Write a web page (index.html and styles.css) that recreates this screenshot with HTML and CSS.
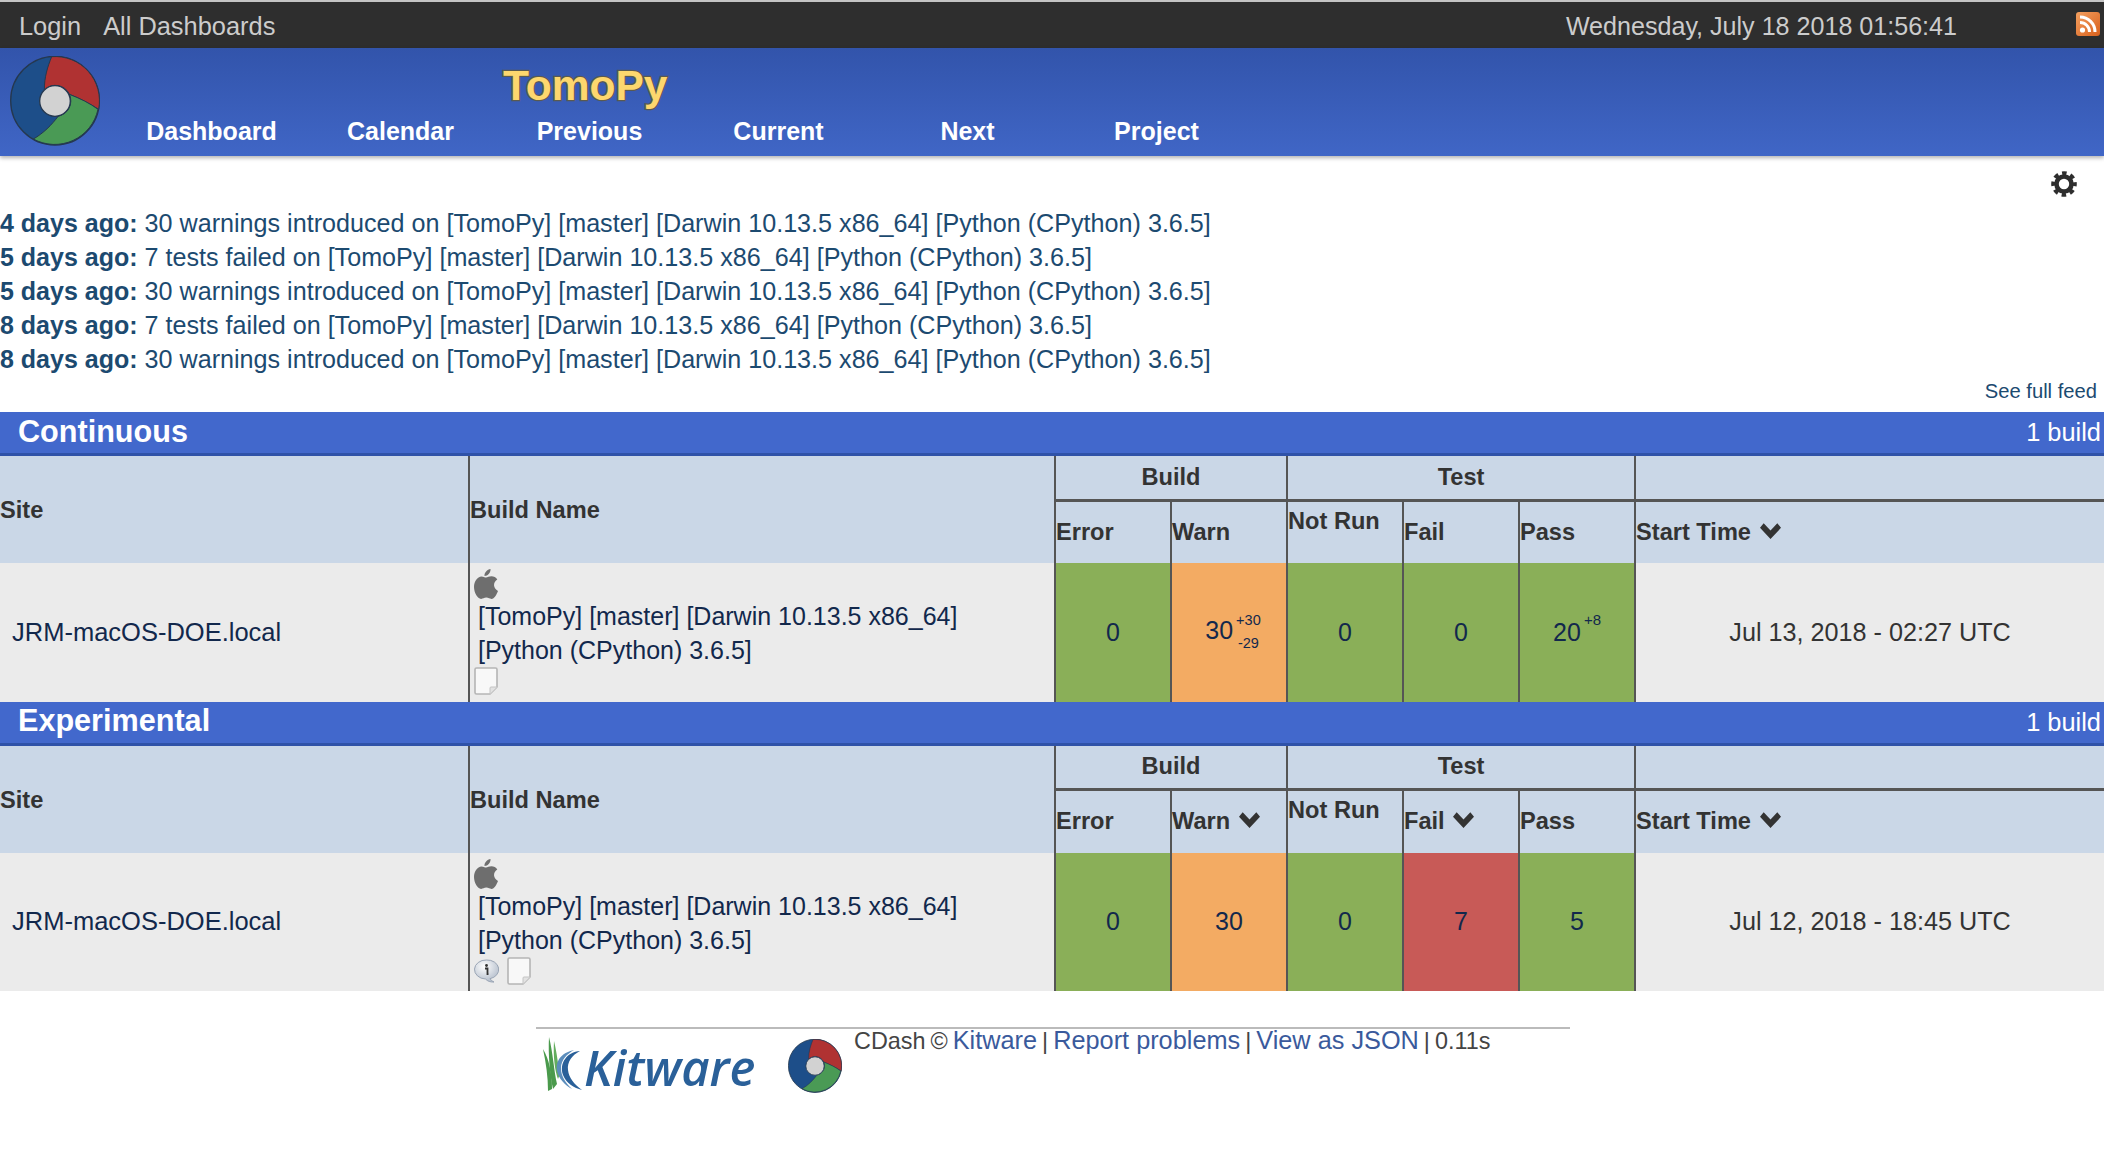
FILE: index.html
```html
<!DOCTYPE html>
<html lang="en">
<head>
    <meta charset="UTF-8">
    <title>CDash - TomoPy</title>
    <link rel="stylesheet" href="styles.css">
</head>
<body>
    <!-- Top bar -->
    <div class="topbar">
        <div class="topbar-links">
            <a href="#">Login</a>
            <a href="#">All Dashboards</a>
        </div>
        <div class="topbar-right">
            <span class="topbar-date">Wednesday, July 18 2018 01:56:41</span>
            <svg class="rss" viewBox="0 0 24 24">
                <defs>
                    <linearGradient id="rss-bg" x1="0" y1="0" x2="1" y2="1">
                        <stop offset="0" stop-color="#f3a060"/>
                        <stop offset="1" stop-color="#d9601c"/>
                    </linearGradient>
                </defs>
                <rect width="24" height="24" rx="3" fill="url(#rss-bg)"/>
                <circle cx="6.5" cy="18" r="2.6" fill="#fff"/>
                <path d="M4 10.5a9.5 9.5 0 0 1 9.5 9.5M4 5a15 15 0 0 1 15 15" fill="none" stroke="#fff" stroke-width="3"/>
            </svg>
        </div>
    </div>

    <!-- Header -->
    <div class="header">
        <svg class="logo" viewBox="30 48 270 270">
            <circle cx="165" cy="182" r="133" fill="#1d4e89" stroke="#25384f" stroke-width="4"/>
            <path d="M155 50A133 133 0 0 1 296 208C268 190 238 175 208 163A46 46 0 0 0 133 150C133 110 143 80 155 50Z" fill="#b03232" stroke="#25384f" stroke-width="3"/>
            <path d="M294 208A133 133 0 0 1 100 297C130 280 155 255 175 228A46 46 0 0 0 208 163C240 175 270 190 294 208Z" fill="#4a9a55" stroke="#25384f" stroke-width="3"/>
            <circle cx="165" cy="183" r="46" fill="#d2d2d2" stroke="#25384f" stroke-width="4"/>
        </svg>
        <div class="header-main">
            <div class="project-title">TomoPy</div>
            <div class="nav">
                <a href="#">Dashboard</a>
                <a href="#">Calendar</a>
                <a href="#">Previous</a>
                <a href="#">Current</a>
                <a href="#">Next</a>
                <a href="#">Project</a>
            </div>
        </div>
    </div>

    <!-- Settings -->
    <div class="settings">
        <svg class="gear" viewBox="0 0 26 26">
            <circle cx="13" cy="13" r="7.5" fill="none" stroke="#2e2e2e" stroke-width="4.6"/>
            <circle cx="13" cy="13" r="10.8" fill="none" stroke="#2e2e2e" stroke-width="4" stroke-dasharray="4.5 3.98" stroke-dashoffset="2.25"/>
        </svg>
    </div>

    <!-- Feed -->
    <div class="feed">
        <div><b>4 days ago:</b> 30 warnings introduced on [TomoPy] [master] [Darwin 10.13.5 x86_64] [Python (CPython) 3.6.5]</div>
        <div><b>5 days ago:</b> 7 tests failed on [TomoPy] [master] [Darwin 10.13.5 x86_64] [Python (CPython) 3.6.5]</div>
        <div><b>5 days ago:</b> 30 warnings introduced on [TomoPy] [master] [Darwin 10.13.5 x86_64] [Python (CPython) 3.6.5]</div>
        <div><b>8 days ago:</b> 7 tests failed on [TomoPy] [master] [Darwin 10.13.5 x86_64] [Python (CPython) 3.6.5]</div>
        <div><b>8 days ago:</b> 30 warnings introduced on [TomoPy] [master] [Darwin 10.13.5 x86_64] [Python (CPython) 3.6.5]</div>
    </div>
    <div class="feed-more"><a href="#">See full feed</a></div>

    <!-- Continuous -->
    <div class="band">
        <span class="band-title">Continuous</span>
        <span class="band-count">1 build</span>
    </div>
    <table class="builds">
        <colgroup>
            <col class="col-site"><col class="col-name"><col class="col-num"><col class="col-num"><col class="col-num"><col class="col-num"><col class="col-num"><col>
        </colgroup>
        <thead>
            <tr class="head-top">
                <th rowspan="2" class="left span-head">Site</th>
                <th rowspan="2" class="left span-head">Build Name</th>
                <th colspan="2">Build</th>
                <th colspan="3">Test</th>
                <th></th>
            </tr>
            <tr class="head-sub">
                <th class="left">Error</th>
                <th class="left">Warn</th>
                <th class="left raised">Not Run</th>
                <th class="left">Fail</th>
                <th class="left">Pass</th>
                <th class="left">Start Time <svg class="chevron" viewBox="0 0 20 15"><path d="M0 4.500L3.500 0 10 7 16.500 0 20 4.500 10 15z"/></svg></th>
            </tr>
        </thead>
        <tbody>
            <tr>
                <td class="site">JRM-macOS-DOE.local</td>
                <td class="name">
                    <svg class="apple" viewBox="0 0 24 30"><path d="M16.500 0c.4 3.500-2.600 7-6 7-.3-3.300 2.700-6.500 6-7zM12 8.500c1.500 0 3-1.200 5.500-1.200 2.200 0 4.500 1.100 5.800 3.300-4.800 2.800-4 9.300 .7 11.300-1.200 3.200-3.700 8-6.500 8-2 0-2.800-1.300-5.200-1.300s-3.200 1.300-5.200 1.300C3.500 29.900 0 23.500 0 18 0 12.300 3.500 7.500 7.500 7.400c1.900 0 3.200 1.100 4.500 1.100z"/></svg>
                    <div class="name-text">[TomoPy] [master] [Darwin 10.13.5 x86_64]<br>[Python (CPython) 3.6.5]</div>
                    <div class="name-icons">
                        <svg class="doc" viewBox="0 0 24 28"><path d="M2.500 1h19a1.500 1.500 0 0 1 1.500 1.500V20l-7 7H2.500A1.500 1.500 0 0 1 1 25.500v-23A1.500 1.500 0 0 1 2.500 1z" fill="#f8f8f8" stroke="#b5b5b5" stroke-width="1.600"/><path d="M23 20h-6a1 1 0 0 0-1 1v6" fill="#e2e2e2" stroke="#c4c4c4"/></svg>
                    </div>
                </td>
                <td class="num good">0</td>
                <td class="num warn has-delta">30<span class="delta"><span>+30</span><span>-29</span></span></td>
                <td class="num good">0</td>
                <td class="num good">0</td>
                <td class="num good">20<span class="delta-up">+8</span></td>
                <td class="time">Jul 13, 2018 - 02:27 UTC</td>
            </tr>
        </tbody>
    </table>

    <!-- Experimental -->
    <div class="band">
        <span class="band-title">Experimental</span>
        <span class="band-count">1 build</span>
    </div>
    <table class="builds">
        <colgroup>
            <col class="col-site"><col class="col-name"><col class="col-num"><col class="col-num"><col class="col-num"><col class="col-num"><col class="col-num"><col>
        </colgroup>
        <thead>
            <tr class="head-top">
                <th rowspan="2" class="left span-head">Site</th>
                <th rowspan="2" class="left span-head">Build Name</th>
                <th colspan="2">Build</th>
                <th colspan="3">Test</th>
                <th></th>
            </tr>
            <tr class="head-sub">
                <th class="left">Error</th>
                <th class="left">Warn <svg class="chevron" viewBox="0 0 20 15"><path d="M0 4.500L3.500 0 10 7 16.500 0 20 4.500 10 15z"/></svg></th>
                <th class="left raised">Not Run</th>
                <th class="left">Fail <svg class="chevron" viewBox="0 0 20 15"><path d="M0 4.500L3.500 0 10 7 16.500 0 20 4.500 10 15z"/></svg></th>
                <th class="left">Pass</th>
                <th class="left">Start Time <svg class="chevron" viewBox="0 0 20 15"><path d="M0 4.500L3.500 0 10 7 16.500 0 20 4.500 10 15z"/></svg></th>
            </tr>
        </thead>
        <tbody>
            <tr>
                <td class="site">JRM-macOS-DOE.local</td>
                <td class="name">
                    <svg class="apple" viewBox="0 0 24 30"><path d="M16.500 0c.4 3.500-2.600 7-6 7-.3-3.300 2.700-6.500 6-7zM12 8.500c1.500 0 3-1.200 5.500-1.200 2.200 0 4.500 1.100 5.800 3.300-4.800 2.800-4 9.300 .7 11.300-1.200 3.200-3.700 8-6.500 8-2 0-2.800-1.300-5.200-1.300s-3.200 1.300-5.200 1.300C3.500 29.900 0 23.500 0 18 0 12.300 3.500 7.500 7.500 7.400c1.900 0 3.200 1.100 4.500 1.100z"/></svg>
                    <div class="name-text">[TomoPy] [master] [Darwin 10.13.5 x86_64]<br>[Python (CPython) 3.6.5]</div>
                    <div class="name-icons">
                        <svg class="info" viewBox="0 0 25 24">
                            <defs>
                                <radialGradient id="info-bg" cx="0.4" cy="0.3" r="0.8">
                                    <stop offset="0" stop-color="#ffffff"/>
                                    <stop offset="1" stop-color="#a9b4c4"/>
                                </radialGradient>
                            </defs>
                            <path d="M12.500 1a11.500 9.500 0 0 1 3.500 18.700c1 1.500 2.200 2.700 4 3.300-3.500 .3-6.500-.8-8.500-3A11.500 9.500 0 0 1 12.500 1z" fill="url(#info-bg)" stroke="#9aa5b5"/>
                            <circle cx="12.500" cy="6.500" r="1.400" fill="#333"/>
                            <path d="M11 9.500h2.500v5.500h1" fill="none" stroke="#333" stroke-width="1.800"/>
                        </svg>
                        <svg class="doc" viewBox="0 0 24 28"><path d="M2.500 1h19a1.500 1.500 0 0 1 1.500 1.500V20l-7 7H2.500A1.500 1.500 0 0 1 1 25.500v-23A1.500 1.500 0 0 1 2.500 1z" fill="#f8f8f8" stroke="#b5b5b5" stroke-width="1.600"/><path d="M23 20h-6a1 1 0 0 0-1 1v6" fill="#e2e2e2" stroke="#c4c4c4"/></svg>
                    </div>
                </td>
                <td class="num good">0</td>
                <td class="num warn">30</td>
                <td class="num good">0</td>
                <td class="num bad">7</td>
                <td class="num good">5</td>
                <td class="time">Jul 12, 2018 - 18:45 UTC</td>
            </tr>
        </tbody>
    </table>

    <!-- Footer -->
    <div class="footer">
        <div class="kitware">
            <svg class="kitware-mark" viewBox="0 0 40 54">
                <path d="M1 12C4 26 6 40 6 54L10 52C10 36 7 22 1 12Z" fill="#4a9a4c"/>
                <path d="M7 0C6 18 8 38 11 52L15 47C12 34 11 16 7 0Z" fill="#4a9a4c"/>
                <path d="M12 4C11 20 13 34 16 42L18 37C16 28 15 16 12 4Z" fill="#63ad5e"/>
                <path d="M38 14C25 15 17 26 21 38 24 46 32 51 40 53 32 47 27 41 26 33 25 25 30 18 38 14Z" fill="#2a6099"/>
                <path d="M32 13C22 15 13 22 15 34 17 42 23 48 30 52 23 45 19 39 19 31 19 23 25 17 32 13Z" fill="#5b8dbc"/>
            </svg>
            <span class="kitware-name">Kitware</span>
        </div>
        <svg class="footer-logo" viewBox="30 48 270 270">
            <circle cx="165" cy="182" r="133" fill="#1d4e89" stroke="#25384f" stroke-width="4"/>
            <path d="M155 50A133 133 0 0 1 296 208C268 190 238 175 208 163A46 46 0 0 0 133 150C133 110 143 80 155 50Z" fill="#b03232" stroke="#25384f" stroke-width="3"/>
            <path d="M294 208A133 133 0 0 1 100 297C130 280 155 255 175 228A46 46 0 0 0 208 163C240 175 270 190 294 208Z" fill="#4a9a55" stroke="#25384f" stroke-width="3"/>
            <circle cx="165" cy="183" r="46" fill="#d2d2d2" stroke="#25384f" stroke-width="4"/>
        </svg>
        <div class="footer-text">CDash © <a href="#">Kitware</a> | <a href="#">Report problems</a> | <a href="#">View as JSON</a> | 0.11s</div>
    </div>
</body>
</html>
```

FILE: styles.css
```css
body {
    margin: 0;
    background: #fff;
    font-family: "Liberation Sans", Arial, sans-serif;
    font-size: 24px;
    color: #12284c;
}

a {
    color: inherit;
    text-decoration: none;
}

.topbar {
    height: 46px;
    border-top: 2px solid #c4c4c4;
    background: #2e2e2e;
    color: #ccc;
    display: flex;
    justify-content: space-between;
    align-items: center;
}

.topbar-links {
    display: flex;
    gap: 22px;
    padding: 2px 0 0 19px;
    font-size: 25.4px;
}

.topbar-right {
    display: flex;
    align-items: center;
    font-size: 25.1px;
}

.topbar-date {
    padding-top: 2px;
    margin-right: 119px;
}

.rss {
    width: 24px;
    height: 24px;
    margin-right: 4px;
    margin-top: -2px;
}

.header {
    height: 108px;
    background: linear-gradient(#3254ab, #4066c6);
    box-shadow: 0 2px 4px rgba(0, 0, 0, 0.3);
    display: flex;
    position: relative;
}

.logo {
    width: 90px;
    height: 90px;
    margin: 8px 0 0 10px;
    flex: none;
}

.header-main {
    margin-left: 17px;
}

.project-title {
    height: 66px;
    padding-left: 386px;
    padding-top: 17px;
    box-sizing: border-box;
    font-size: 42.5px;
    line-height: 42px;
    font-weight: bold;
    color: #fdd76e;
    -webkit-text-stroke: 2.5px #5a5a50;
    paint-order: stroke fill;
}

.nav {
    display: flex;
}

.nav a {
    width: 189px;
    text-align: center;
    color: #fff;
    font-size: 25px;
    font-weight: bold;
    line-height: 34px;
}

.settings {
    display: flex;
    justify-content: flex-end;
    padding: 15px 27px 0 0;
}

.gear {
    width: 26px;
    height: 26px;
}

.feed {
    margin-top: 9px;
    font-size: 25.15px;
    line-height: 34px;
    color: #1c4a70;
}

.feed b {
    font-size: 25px;
}

.feed-more {
    height: 36px;
    padding-right: 7px;
    text-align: right;
    font-size: 20.2px;
    line-height: 30px;
    color: #1c4a70;
}

.band {
    height: 41px;
    background: #4268cc;
    border-bottom: 3px solid #2f52a8;
    color: #fff;
    display: flex;
    justify-content: space-between;
    align-items: center;
}

.band-title {
    padding: 0 0 3px 18px;
    font-size: 30.6px;
    font-weight: bold;
}

.band-count {
    padding-right: 3px;
    font-size: 25.4px;
}

.builds {
    width: 100%;
    table-layout: fixed;
    border-collapse: collapse;
}

.col-site {
    width: 469px;
}

.col-name {
    width: 586px;
}

.col-num {
    width: 116px;
}

.builds th {
    padding: 0;
    background: #cad7e7;
    color: #333;
    font-size: 23.6px;
    text-align: center;
    border-left: 2px solid #555;
}

.builds th.left {
    text-align: left;
}

.builds th.span-head {
    padding-top: 2px;
}

.builds th:first-child,
.builds td:first-child {
    border-left: none;
}

.head-top {
    height: 44px;
}

.head-top th:nth-child(n+3) {
    border-bottom: 3px solid #555;
}

.head-sub {
    height: 63px;
}

.head-sub th:first-child {
    border-left: 2px solid #555;
}

.builds th.raised {
    vertical-align: top;
    padding-top: 6px;
}

.chevron {
    width: 21px;
    height: 16px;
    margin-left: 2px;
    vertical-align: 1px;
    fill: #333;
}

.builds td {
    padding: 0;
    height: 138.5px;
    border-left: 2px solid #555;
    background: #ebebeb;
    font-size: 25px;
}

.builds td.site {
    padding-left: 12px;
    font-size: 25.5px;
}

.builds td.name {
    padding: 6px 0 0 4px;
    vertical-align: top;
    box-sizing: border-box;
}

.apple {
    display: block;
    width: 24px;
    height: 30px;
    fill: #6e6e6e;
}

.name-text {
    margin-left: 4px;
    line-height: 34px;
}

.name-icons {
    display: flex;
    align-items: center;
    gap: 8px;
}

.doc {
    width: 24px;
    height: 28px;
}

.info {
    width: 25px;
    height: 24px;
}

.builds td.num {
    text-align: center;
}

.builds td.has-delta {
    padding-left: 8px;
}

.builds td.good {
    background: #8aaf58;
}

.builds td.warn {
    background: #f3ab63;
}

.builds td.bad {
    background: #c85a57;
}

.delta {
    display: inline-flex;
    flex-direction: column;
    vertical-align: middle;
    margin-left: 3px;
    font-size: 14.5px;
    line-height: 23px;
}

.delta-up {
    margin-left: 3px;
    font-size: 15px;
    line-height: 0;
    vertical-align: 16px;
}

.builds td.time {
    text-align: center;
    color: #333;
    font-size: 25.2px;
}

.footer {
    width: 1034px;
    margin: 36px 0 0 536px;
    border-top: 2px solid #bbb;
    display: flex;
    align-items: flex-start;
    padding-bottom: 40px;
}

.kitware {
    display: flex;
    align-items: flex-start;
    margin: 8px 0 0 6px;
    width: 214px;
    height: 54px;
}

.kitware-mark {
    width: 40px;
    height: 54px;
    flex: none;
}

.kitware-name {
    font-family: "Open Sans", sans-serif;
    font-style: italic;
    font-weight: 600;
    font-size: 49px;
    line-height: 54px;
    color: #2a6099;
    margin: 3px 0 0 2px;
}

.footer-logo {
    width: 54px;
    height: 54px;
    margin: 10px 0 0 32px;
    flex: none;
}

.footer-text {
    margin-left: 12px;
    color: #444;
    font-size: 23.4px;
    line-height: 22px;
    word-spacing: -1.5px;
}

.footer-text a {
    color: #3a5a9c;
    font-size: 25.3px;
    word-spacing: 0;
}
```
